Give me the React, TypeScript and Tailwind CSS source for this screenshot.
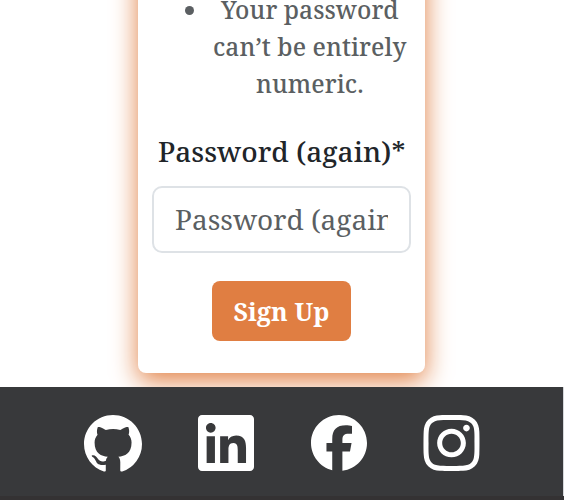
import { BsGithub } from "react-icons/bs";
import { FaFacebook, FaInstagram, FaLinkedin } from "react-icons/fa6";

function SignUpCard() {
  return (
    <section className="-mt-[80px] ml-[138px] flex h-[453px] w-[287px] flex-col rounded-b-[8px] bg-white pt-[80px] shadow-[0_8px_26px_rgba(224,126,66,0.98)]">
      <ul className="h-[103px] text-[24.5px] leading-[37px] font-medium tracking-[0.06px] whitespace-nowrap text-[#5b5f62]">
        <li className="flex h-[28px] items-end">
          <span className="mb-[13px] ml-[47px] h-[9px] w-[9px] shrink-0 rounded-full bg-[#5b5f62]" />
          <span className="ml-[27px]">Your password</span>
        </li>
        <li className="pl-[75px]">can’t be entirely</li>
        <li className="pl-[118px]">numeric.</li>
      </ul>
      <label className="mt-[28px] block h-[40px] pl-[20px] text-[28px] leading-[40px] font-medium tracking-[0.04px] whitespace-nowrap text-[#212529]">
        Password (again)*
      </label>
      <div className="mt-[15px] ml-[14px] h-[67px] w-[259px] rounded-[10px] border-2 border-[#dee2e6] px-[21px]">
        <div className="h-full overflow-hidden text-[28px] leading-[63px] whitespace-nowrap text-[#5b5f62]">
          Password (again)
        </div>
      </div>
      <button className="mt-[28px] ml-[74px] block h-[60px] w-[139px] rounded-[8px] bg-[#e07e42] text-[25px] leading-[61px] font-bold tracking-[0.1px] whitespace-nowrap text-white">
        Sign Up
      </button>
    </section>
  );
}

export default function App() {
  return (
    <div className="flex h-[502px] w-[566px] flex-col overflow-hidden bg-white font-['Noto_Serif','DejaVu_Serif_Condensed','DejaVu_Serif',serif]">
      <main className="h-[387px] w-[564px] shrink-0 overflow-hidden">
        <SignUpCard />
      </main>
      <footer className="w-[564px] shrink-0 border-b-4 border-[#343233]">
        <div className="flex h-[109px] gap-[56px] border-r border-[#d5d7db] bg-[#38393b] pt-[28px] pl-[84px] text-white">
          <BsGithub className="h-[58px] w-[58px]" />
          <FaLinkedin className="-mt-[4px] h-[64px] w-[56px]" />
          <FaFacebook className="ml-px h-[56px] w-[56px]" />
          <FaInstagram className="-mt-[4px] h-[64px] w-[57px]" />
        </div>
      </footer>
    </div>
  );
}
